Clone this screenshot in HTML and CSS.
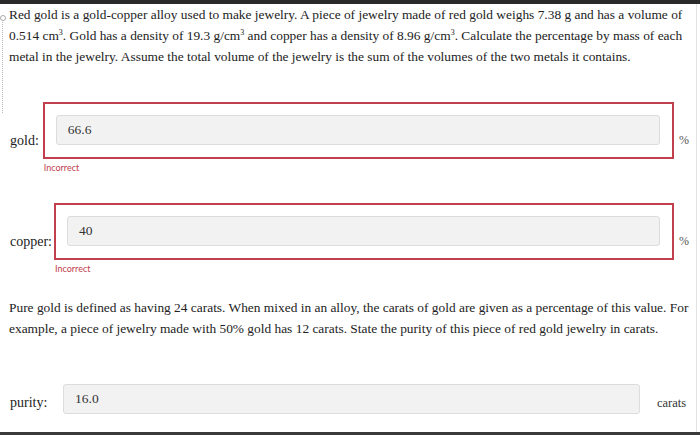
FILE: index.html
```html
<!DOCTYPE html>
<html>
<head>
<meta charset="utf-8">
<link rel="stylesheet" href="styles.css">
</head>
<body>
<div class="topbar"></div>
<div class="page">
  <span class="gutter" aria-hidden="true"></span>
  <p class="text">Red gold is a gold-copper alloy used to make jewelry. A piece of jewelry made of red gold weighs 7.38 g and has a volume of 0.514 cm<sup>3</sup>. Gold has a density of 19.3 g/cm<sup>3</sup> and copper has a density of 8.96 g/cm<sup>3</sup>. Calculate the percentage by mass of each metal in the jewelry. Assume the total volume of the jewelry is the sum of the volumes of the two metals it contains.</p>

  <div class="row row-gold">
    <span class="label">gold:</span>
    <div class="box"><div class="input">66.6</div></div>
    <span class="unit">%</span>
    <span class="msg">Incorrect</span>
  </div>

  <div class="row row-copper">
    <span class="label">copper:</span>
    <div class="box"><div class="input">40</div></div>
    <span class="unit">%</span>
    <span class="msg">Incorrect</span>
  </div>

  <p class="text text2">Pure gold is defined as having 24 carats. When mixed in an alloy, the carats of gold are given as a percentage of this value. For<br>example, a piece of jewelry made with 50% gold has 12 carats. State the purity of this piece of red gold jewelry in carats.</p>

  <div class="purity">
    <span class="label">purity:</span>
    <div class="input">16.0</div>
    <span class="unit unit-carats">carats</span>
  </div>
</div>
<div class="bottombar"></div>
</body>
</html>
```

FILE: styles.css
```css
html, body {
  margin: 0;
  padding: 0;
}
body {
  width: 700px;
  height: 435px;
  overflow: hidden;
  display: flex;
  flex-direction: column;
  background: #ffffff;
  font-family: "Liberation Serif", "Times New Roman", serif;
  color: #222;
}
.topbar {
  height: 4px;
  background: #2a2a2a;
  flex: none;
}
.bottombar {
  height: 3px;
  background: #3a3a3a;
  flex: none;
  margin-top: auto;
}
.page {
  position: relative;
  width: 697px;
  border-right: 1px solid #e2e2e2;
  flex: 1;
  box-sizing: border-box;
}
.gutter {
  position: absolute;
  left: 2px;
  top: 13px;
  width: 0;
  height: 96px;
  border-left: 1px dotted #b8b8b8;
}
.gutter::before {
  content: "";
  position: absolute;
  left: -3px;
  top: -2px;
  width: 4px;
  height: 4px;
  border: 1px solid #aaa;
  border-radius: 50%;
  background: #fff;
}
.text {
  margin: 0;
  padding: 0 10px 0 9px;
  font-size: 13.4px;
  line-height: 21px;
  color: #222;
}
.text sup {
  font-size: 8px;
  line-height: 1;
  vertical-align: super;
}
.text2 {
  margin-top: 22px;
  padding-right: 2px;
  white-space: nowrap;
}
.row {
  display: grid;
  grid-template-columns: auto 1fr 22px;
  grid-template-rows: auto auto;
  align-items: center;
  margin-top: 35px;
}
.row-copper {
  margin-top: 29px;
}
.label {
  padding-left: 10px;
  font-size: 14px;
  color: #222;
}
.row .label {
  padding-top: 20px;
}
.row-gold .label {
  padding-right: 4px;
}
.row-copper .label {
  padding-right: 2px;
}
.box {
  border: 2px solid #c2404d;
  padding: 11px 12px 12px 11px;
}
.input {
  height: 30px;
  box-sizing: border-box;
  background: #f2f2f2;
  border: 1px solid #dcdcdc;
  border-radius: 3px;
  padding: 0 11px;
  display: flex;
  align-items: center;
  font-size: 13.5px;
  color: #333;
}
.unit {
  padding-left: 5px;
  padding-top: 20px;
  font-size: 12px;
  color: #555;
}
.msg {
  grid-column: 2;
  grid-row: 2;
  margin-top: 3px;
  padding-left: 1px;
  font-family: "Lato", "Open Sans", sans-serif;
  font-size: 9px;
  line-height: 12px;
  color: #c2404d;
}
.purity {
  display: flex;
  align-items: center;
  margin-top: 45px;
}
.purity .label {
  width: 63px;
  box-sizing: border-box;
  padding-top: 8px;
  flex: none;
}
.purity .input {
  width: 577px;
  flex: none;
}
.unit-carats {
  padding-left: 17px;
  padding-top: 8px;
  font-size: 12.5px;
  color: #333;
}
```
